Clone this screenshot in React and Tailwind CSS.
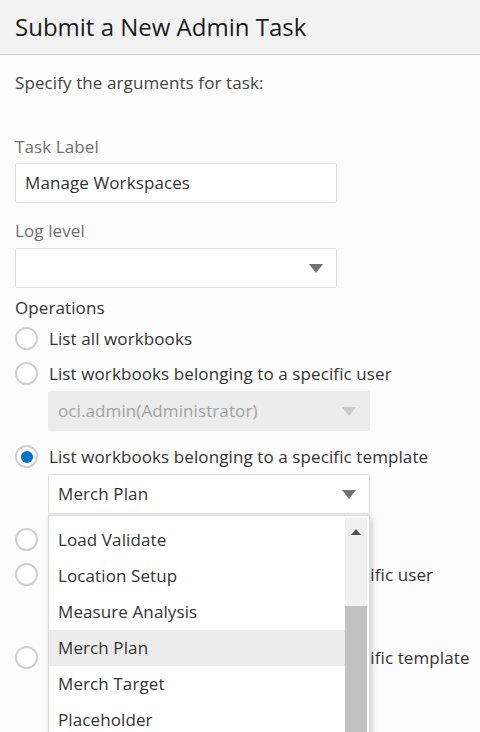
const templates = [
  'Load Validate',
  'Location Setup',
  'Measure Analysis',
  'Merch Plan',
  'Merch Target',
  'Placeholder',
];

function Caret({ disabled }) {
  return (
    <svg width="14" height="9" viewBox="0 0 14 9" className="shrink-0">
      <path d="M0 0h14L7 9z" fill={disabled ? '#c9c9c9' : '#737373'} />
    </svg>
  );
}

function Select({ value, disabled, children }) {
  const tone = disabled
    ? 'bg-[#ececec] border-[#ececec] text-[#a3a3a3]'
    : 'bg-white border-[#dedede] text-[#333]';
  return (
    <div className={`relative w-[322px] h-[40px] border rounded-[2px] flex items-center justify-between pl-[9px] pr-[13px] ${tone}`}>
      <span>{value}</span>
      <Caret disabled={disabled} />
      {children}
    </div>
  );
}

function Radio({ checked, label }) {
  return (
    <div className="h-[35px] flex items-center gap-[11px]">
      <span className="w-[23px] h-[23px] shrink-0 rounded-full border-2 border-[#d0d0d0] bg-white flex items-center justify-center">
        {checked && <span className="w-[12px] h-[12px] rounded-full bg-[#0572ce]" />}
      </span>
      <span className="text-[#333] whitespace-nowrap">{label}</span>
    </div>
  );
}

function TemplateMenu() {
  return (
    <div className="absolute left-[-1px] top-[40px] w-[322px] h-[260px] bg-white border border-[#d9d9d9] shadow-[2px_2px_6px_rgba(0,0,0,0.2)] flex z-10">
      <ul className="flex-1 pt-[6px]">
        {templates.map((t) => (
          <li
            key={t}
            className={`h-[36px] flex items-center pl-[9px] text-[#333] ${t === 'Merch Plan' ? 'bg-[#ececec]' : ''}`}
          >
            {t}
          </li>
        ))}
      </ul>
      <div className="w-[22px] mr-[2px] mt-[2px] bg-[#f0f0f0] flex flex-col">
        <div className="h-[88px] flex justify-center pt-[11px]">
          <svg width="10" height="6" viewBox="0 0 10 6">
            <path d="M5 0l5 6H0z" fill="#505050" />
          </svg>
        </div>
        <div className="flex-1 bg-[#c1c1c1]" />
      </div>
    </div>
  );
}

export default function App() {
  return (
    <div className="w-[480px] h-[732px] overflow-hidden bg-[#fcfcfc] font-['Open_Sans',sans-serif] text-[17px] leading-[24px] tracking-[0.1px]">
      <header className="h-[55px] bg-[#f2f2f2] border-b border-[#cccccc] flex items-center px-[15px]">
        <h1 className="text-[24px] tracking-normal text-[#1b1b1b] font-normal">Submit a New Admin Task</h1>
      </header>

      <main className="px-[15px] pt-[16px]">
        <p className="text-[#444]">Specify the arguments for task:</p>

        <label className="block mt-[40px] mb-[4px] text-[#707070]">Task Label</label>
        <div className="w-[322px] h-[40px] bg-white border border-[#dedede] rounded-[2px] flex items-center pl-[9px] text-[#333]">
          Manage Workspaces
        </div>

        <label className="block mt-[16px] mb-[5px] text-[#707070]">Log level</label>
        <Select value="" />

        <p className="mt-[8px] text-[#333]">Operations</p>
        <div className="mt-[1px]">
          <Radio label="List all workbooks" />
          <Radio label="List workbooks belonging to a specific user" />
          <div className="ml-[33px] mb-[8px]">
            <Select value="oci.admin(Administrator)" disabled />
          </div>
          <Radio checked label="List workbooks belonging to a specific template" />
          <div className="ml-[33px] mb-[8px]">
            <Select value="Merch Plan">
              <TemplateMenu />
            </Select>
          </div>
          <Radio label="Delete all workbooks" />
          <Radio label="Upgrade workbooks belonging to a specific user" />
          <div className="ml-[33px] mb-[8px]">
            <Select value="oci.admin(Administrator)" disabled />
          </div>
          <Radio label="Upgrade workbooks belonging to a specific template" />
        </div>
      </main>
    </div>
  );
}
